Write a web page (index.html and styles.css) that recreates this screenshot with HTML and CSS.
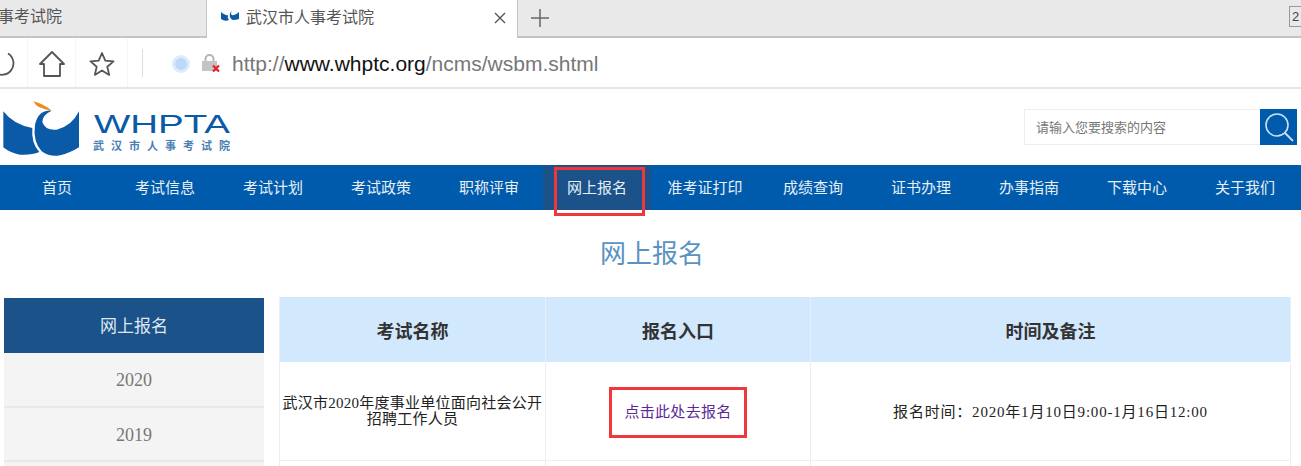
FILE: index.html
```html
<!DOCTYPE html>
<html lang="zh">
<head>
<meta charset="utf-8">
<title>武汉市人事考试院</title>
<link rel="stylesheet" href="styles.css">
</head>
<body>
<div class="tabs">
  <div class="tab tab-left"><span>事考试院</span></div>
  <div class="tab tab-active">
    <svg class="favicon" width="18" height="12" viewBox="0 0 18 12"><path d="M0 2q4 4 7 3q-1 3 1 5q-4 2-8-1z M18 2q-4 4-7 3q-2-1 0-4q-3 2-2 6q1 3 3 3q3 0 6-1z" fill="#0a5aa8"/></svg>
    <span class="tab-title">武汉市人事考试院</span>
    <svg class="tab-close" width="12" height="12" viewBox="0 0 12 12"><path d="M1 1l10 10M11 1L1 11" stroke="#555" stroke-width="1.4"/></svg>
  </div>
  <svg class="tab-plus" width="20" height="20" viewBox="0 0 20 20"><path d="M10 1v18M1 10h18" stroke="#666" stroke-width="1.5"/></svg>
  <div class="tab-count">2</div>
</div>
<div class="toolbar">
  <div class="tool tool-first">
    <svg width="18" height="28" viewBox="0 0 18 28"><path d="M8 3.500A11.500 11.500 0 1 1 -6 5" fill="none" stroke="#555" stroke-width="1.800"/></svg>
  </div>
  <div class="tool tool-home">
    <svg width="28" height="28" viewBox="0 0 28 28"><path d="M2 14L14 2l12 12h-4v12H6V14z" fill="none" stroke="#555" stroke-width="1.800" stroke-linejoin="round"/></svg>
  </div>
  <div class="tool tool-star">
    <svg width="26" height="26" viewBox="0 0 26 26"><path d="M13 2l3.300 7.600 8.200.8-6.200 5.400 1.900 8.100-7.200-4.300-7.200 4.300 1.900-8.100-6.200-5.400 8.200-.8z" fill="none" stroke="#555" stroke-width="1.800" stroke-linejoin="round"/></svg>
  </div>
  <div class="tool-sep"></div>
  <div class="sec-dot"></div>
  <svg class="sec-lock" width="20" height="20" viewBox="0 0 20 20"><path d="M4.500 8V6a4 4 0 0 1 8 0v2" fill="none" stroke="#b5b5b5" stroke-width="2"/><rect x="1" y="8" width="15" height="10" fill="#c4c4c4"/><path d="M12 12.500l6 6M18 12.500l-6 6" stroke="#e5202a" stroke-width="2.200"/></svg>
  <div class="url">http://<b>www.whptc.org</b>/ncms/wsbm.shtml</div>
</div>
<header class="site-head">
  <div class="logo">
    <svg class="logo-mark" width="90" height="60" viewBox="0 0 270 180">
      <path d="M10 40Q40 80 97 90Q93 135 118 162Q95 172 60 170Q30 165 10 148Z" fill="#0a5aa8"/>
      <path d="M237 40Q215 85 170 95Q135 98 127 72Q128 50 155 38Q115 35 105 80Q98 130 125 160Q150 178 180 172Q210 165 237 148Z" fill="#0a5aa8"/>
      <path d="M100 10Q110 33 155 38Q135 20 100 10Z" fill="#f08a1d"/>
    </svg>
    <div class="logo-text">
      <svg class="logo-en" width="138" height="20" viewBox="0 0 138 20"><text x="1" y="19" textLength="136" lengthAdjust="spacingAndGlyphs">WHPTA</text></svg>
      <div class="logo-cn">武汉市人事考试院</div>
    </div>
  </div>
  <form class="search">
    <div class="search-input">请输入您要搜索的内容</div>
    <div class="search-btn">
      <svg width="32" height="32" viewBox="0 0 32 32"><circle cx="14" cy="14" r="11" fill="none" stroke="#cfe0f0" stroke-width="1.600"/><path d="M22 22l8 8" stroke="#cfe0f0" stroke-width="1.800"/></svg>
    </div>
  </form>
</header>
<nav class="nav">
  <a>首页</a><a>考试信息</a><a>考试计划</a><a>考试政策</a><a>职称评审</a>
  <a class="nav-active">网上报名<i class="mark mark-nav"></i></a>
  <a>准考证打印</a><a>成绩查询</a><a>证书办理</a><a>办事指南</a><a>下载中心</a><a>关于我们</a>
</nav>
<h1 class="page-title">网上报名</h1>
<main class="content">
  <aside class="side">
    <div class="side-head">网上报名</div>
    <div class="side-item">2020</div>
    <div class="side-item">2019</div>
    <div class="side-rest"></div>
  </aside>
  <table class="exams">
    <colgroup><col class="c1"><col class="c2"><col class="c3"></colgroup>
    <thead><tr><th>考试名称</th><th>报名入口</th><th>时间及备注</th></tr></thead>
    <tbody>
      <tr>
        <td class="exam-name">武汉市2020年度事业单位面向社会公开招聘工作人员</td>
        <td class="exam-link"><a>点击此处去报名</a><i class="mark mark-link"></i></td>
        <td class="exam-time">报名时间：2020年1月10日9:00-1月16日12:00</td>
      </tr>
      <tr class="row-next"><td></td><td></td><td></td></tr>
    </tbody>
  </table>
</main>
</body>
</html>
```
FILE: styles.css
```css
* { box-sizing: border-box; }
html, body { margin: 0; padding: 0; height: 466px; overflow: hidden; background: #fff; }
body { font-family: "Liberation Serif", "Noto Sans CJK SC", serif; color: #333; width: 1301px; }

.tabs { height: 38px; background: #e9e9e9; border-bottom: 2px solid #c4c4c4; display: flex; align-items: stretch; position: relative; font-family: "Noto Sans CJK SC", sans-serif; font-size: 16px; color: #555; }
.tab { display: flex; align-items: center; padding-bottom: 6px; }
.tab-left { width: 206px; }
.tab-left span { margin-left: -2px; }
.tab-active { width: 312px; height: 38px; background: #fff; border-left: 1px solid #c4c4c4; border-right: 1px solid #c4c4c4; padding-left: 14px; }
.favicon { margin-right: 7px; }
.tab-title { flex: 1; }
.tab-close { margin: 3px 11px 0 0; }
.tab-plus { align-self: center; margin-left: 12px; }
.tab-count { position: absolute; right: 0; top: 6px; width: 12px; height: 21px; border: 1px solid #999; border-right: 0; font: 13px/19px "Liberation Sans", sans-serif; padding-left: 2px; color: #444; }

.toolbar { height: 51px; border-bottom: 2px solid #e6e6e6; display: flex; align-items: stretch; }
.tool { display: flex; align-items: center; justify-content: center; border-right: 1px solid #f6f6f6; padding-top: 2px; }
.tool-first { width: 28px; justify-content: flex-start; }
.tool-home { width: 48px; }
.tool-star { width: 52px; }
.tool-sep { width: 1px; height: 28px; background: #ddd; margin: 11px 0 0 14px; }
.sec-dot { width: 18px; height: 18px; border-radius: 50%; background: #bcd8fb; border: 3px solid #dfeafb; margin: 17px 0 0 29px; }
.sec-lock { margin: 15px 0 0 11px; }
.url { margin: 0 0 0 11px; font: 21px/51px "Liberation Sans", sans-serif; color: #777; }
.url b { font-weight: 400; color: #111; }

.site-head { height: 76px; display: flex; justify-content: space-between; align-items: center; padding-right: 4px; }
.logo { display: flex; align-items: center; }
.logo-mark { margin-top: 2px; }
.logo-text { margin: 12px 0 0 3px; }
.logo-en { display: block; margin-bottom: 4px; overflow: visible; }
.logo-en text { font: 400 25px "Liberation Sans", sans-serif; fill: #0a5aa8; }
.logo-cn { font: 700 11px/14px "Noto Sans CJK SC", sans-serif; letter-spacing: 7px; color: #4a7fb5; white-space: nowrap; }
.search { display: flex; height: 36px; }
.search-input { width: 236px; border: 1px solid #eee; border-right: 0; padding-left: 11px; font: 13px/34px "Noto Sans CJK SC", sans-serif; color: #777; }
.search-btn { width: 37px; background: #005bac; display: flex; align-items: center; justify-content: center; }

.nav { height: 45px; background: #005bac; display: flex; padding-left: 3px; font-family: "Noto Sans CJK SC", sans-serif; font-size: 15px; }
.nav a { width: 108px; text-align: center; line-height: 44px; color: #e8eff7; position: relative; }
.nav .nav-active { background: #1a5289; }

.mark { position: absolute; border: 3px solid #f0383c; display: block; }
.mark-nav { left: 11px; top: 2px; width: 91px; height: 49px; }
.mark-link { left: 63px; top: 25px; width: 138px; height: 51px; }

.page-title { margin: 0; height: 88px; padding: 25px 0 0 3px; text-align: center; font: 400 26px/34px "Noto Sans CJK SC", sans-serif; color: #5a93c2; }

.content { display: flex; align-items: flex-start; padding-left: 4px; }
.side { width: 260px; margin-right: 15px; }
.side-head { height: 55px; background: #1a5289; color: #dfe8f1; text-align: center; font: 17px/54px "Noto Sans CJK SC", sans-serif; }
.side-item { height: 54.500px; background: #f4f4f4; border-bottom: 2px solid #e8e8e8; text-align: center; font-size: 18px; line-height: 54px; color: #777; }
.side-rest { height: 4px; background: #f4f4f4; }

.exams { width: 1011px; table-layout: fixed; border-collapse: collapse; margin-top: -1px; font-size: 15px; }
.c1 { width: 266px; }
.c2 { width: 265px; }
.c3 { width: 480px; }
.exams th { height: 65px; background: #d2e8fd; border: 1px solid #e8f0f8; border-width: 0 1px; font: 700 18px "Noto Sans CJK SC", sans-serif; color: #333; padding: 0; }
.exams td { height: 98px; border: 1px solid #eee; border-top: 0; text-align: center; padding: 0; color: #222; position: relative; }
.exam-name { line-height: 16px; letter-spacing: .25px; }
.exam-link { letter-spacing: .3px; }
.exam-link a { color: #5b2a96; }
.exam-time { letter-spacing: .8px; }
.exams .row-next td { height: 6px; border-bottom: 0; }
```
